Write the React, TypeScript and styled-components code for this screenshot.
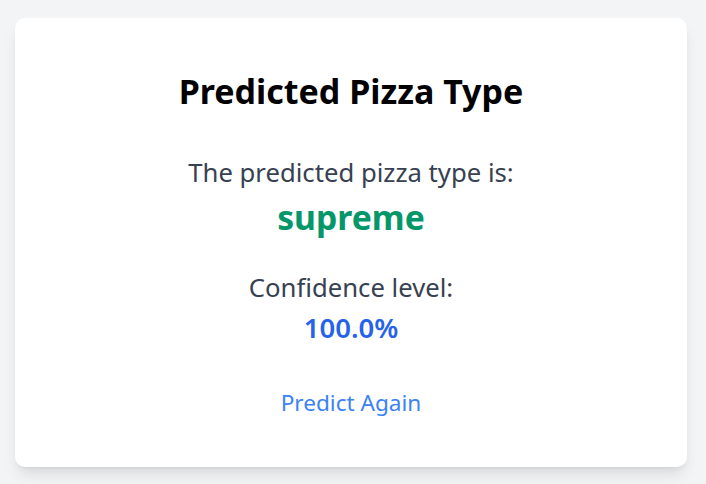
import React from "react";
import styled, { createGlobalStyle } from "styled-components";

const Global = createGlobalStyle`
  html, body { margin: 0; padding: 0; background: #f3f4f6; }
  body { font-family: "Noto Sans", "Open Sans", sans-serif; }
`;

const Page = styled.div`
  min-height: 484px;
  box-sizing: border-box;
  padding: 18px 19px 17px 15px;
  display: flex;
`;

const Card = styled.div`
  width: 672px;
  height: 449px;
  box-sizing: border-box;
  background: #ffffff;
  border-radius: 10px;
  box-shadow: 0 10px 15px -3px rgba(0, 0, 0, 0.1), 0 4px 6px -4px rgba(0, 0, 0, 0.1);
  padding: 53px 32px 32px;
  display: flex;
  flex-direction: column;
  align-items: center;
  text-align: center;
`;

const Title = styled.h2`
  margin: 0 0 45px;
  font-size: 34px;
  line-height: 40px;
  font-weight: 700;
  color: #000;
`;

const Label = styled.p`
  margin: 0;
  font-size: 25.7px;
  line-height: 34px;
  color: #374151;
`;

const Value = styled.p<{ $color: string; $size: number; $weight: number; $gap: number }>`
  margin: ${(p) => p.$gap}px 0 0;
  font-size: ${(p) => p.$size}px;
  line-height: 40px;
  font-weight: ${(p) => p.$weight};
  color: ${(p) => p.$color};
`;

const Section = styled.div<{ $below: number }>`
  display: flex;
  flex-direction: column;
  align-items: center;
  margin-bottom: ${(p) => p.$below}px;
`;

const LinkButton = styled.button`
  border: none;
  background: none;
  padding: 0;
  font-family: inherit;
  font-size: 22.6px;
  line-height: 30px;
  color: #3b82f6;
  cursor: pointer;
`;

export default function App() {
  return (
    <>
      <Global />
      <Page>
        <Card>
          <Title>Predicted Pizza Type</Title>
          <Section $below={34}>
            <Label>The predicted pizza type is:</Label>
            <Value $color="#059669" $size={33.7} $weight={700} $gap={7}>supreme</Value>
          </Section>
          <Section $below={40}>
            <Label>Confidence level:</Label>
            <Value $color="#2563eb" $size={27.5} $weight={600} $gap={3}>100.0%</Value>
          </Section>
          <LinkButton>Predict Again</LinkButton>
        </Card>
      </Page>
    </>
  );
}
